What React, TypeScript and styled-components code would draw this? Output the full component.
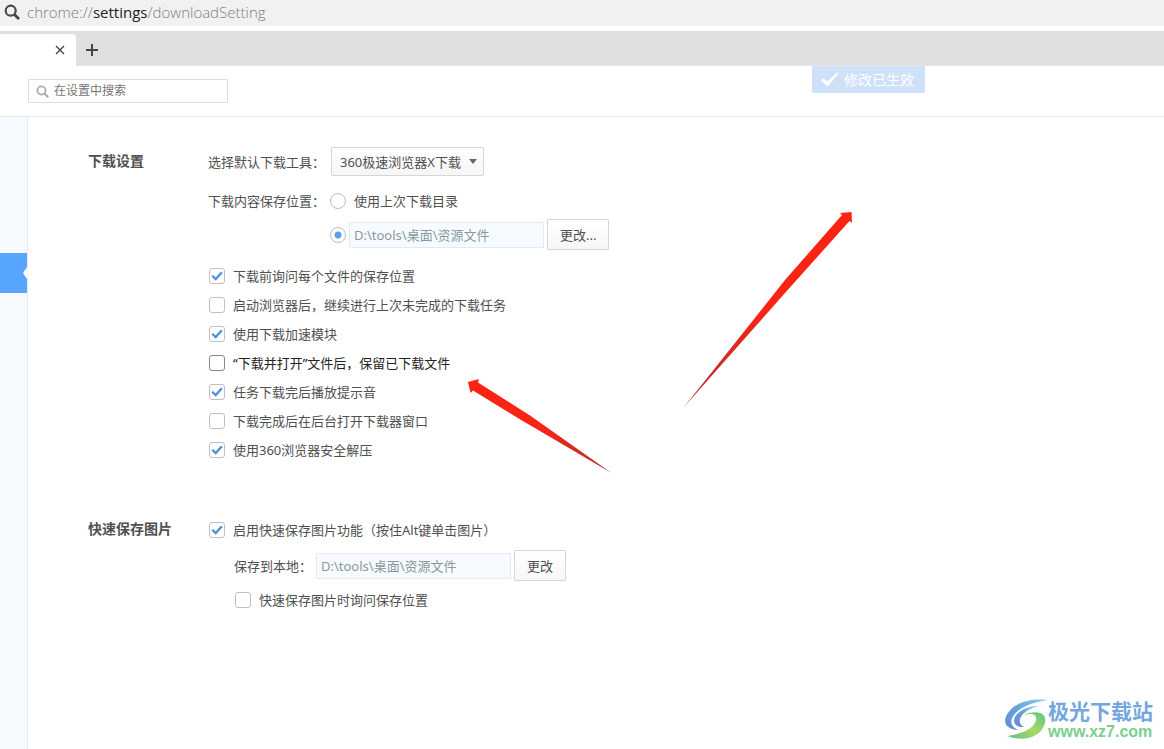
import React from "react";
import styled, { createGlobalStyle } from "styled-components";

const GlobalStyle = createGlobalStyle`
  *, *::before, *::after { box-sizing: border-box; }
  body {
    margin: 0;
    background: #fff;
    color: #505050;
    font: 13px/20px "Noto Sans", "Noto Sans CJK SC", sans-serif;
  }
  button, input, select { font: inherit; color: inherit; margin: 0; }
`;

const Page = styled.div`
  position: relative;
  display: flex;
  flex-direction: column;
  min-height: 100vh;
  overflow: hidden;
`;

const AddressBar = styled.div`
  display: flex;
  align-items: center;
  gap: 7px;
  height: 26px;
  padding: 0 4px 3px;
  background: #f1f1f1;
`;

const Address = styled.span`
  color: #808080;
  font: 300 15px/20px "Open Sans", "Noto Sans", sans-serif;

  b { color: #222; font-weight: 400; }
`;

const TabStrip = styled.div`
  display: flex;
  height: 35px;
  margin-top: 5px;
  padding-top: 3px;
  background: #dfdfdf;
  border-bottom: 1px solid #e6e6e6;
`;

const Tab = styled.div`
  display: flex;
  align-items: center;
  justify-content: flex-end;
  width: 76px;
  height: 32px;
  padding-right: 10px;
  background: #fff;
  border-top-right-radius: 4px;
`;

const IconButton = styled.button`
  display: flex;
  align-items: center;
  padding: 0;
  border: 0;
  background: none;
`;

const NewTab = styled(IconButton)`
  padding-left: 9px;
`;

const Header = styled.header`
  position: relative;
  padding: 13px 28px;
  border-bottom: 1px solid #ebebeb;
`;

const SearchBox = styled.label`
  display: flex;
  align-items: center;
  gap: 5px;
  width: 200px;
  height: 24px;
  padding: 0 7px;
  border: 1px solid #dedede;
  border-radius: 1px;
`;

const SearchInput = styled.input`
  flex: 1;
  min-width: 0;
  padding: 0;
  border: 0;
  outline: 0;
  background: none;
  font-size: 12px;

  &::placeholder { color: #757575; opacity: 1; }
`;

const Toast = styled.div`
  position: absolute;
  top: 0;
  right: 239px;
  display: flex;
  align-items: center;
  gap: 5px;
  height: 27px;
  padding: 0 11px 0 9px;
  border-radius: 1px;
  background: #cfe1f9;
  color: #fff;
  font-size: 14px;
`;

const Body = styled.div`
  display: flex;
  flex: 1;
`;

const Sidebar = styled.nav`
  width: 28px;
  padding-top: 136px;
  background: #f7fbff;
  border-right: 1px solid #e4ebf2;
`;

const ActiveItem = styled.a`
  display: flex;
  align-items: center;
  justify-content: flex-end;
  height: 40px;
  background: #57a5ff;
`;

const Main = styled.main`
  flex: 1;
  display: flex;
  flex-direction: column;
  gap: 51px;
  padding: 30px 60px;
`;

const Section = styled.section`
  display: grid;
  grid-template-columns: 120px 1fr;
`;

const Title = styled.h2`
  margin: 0;
  font-size: 14px;
  font-weight: 700;
  line-height: 28px;
`;

const Fields = styled.div`
  display: flex;
  flex-direction: column;
`;

const Row = styled.div<{ $top?: number; $indent?: number }>`
  display: flex;
  align-items: center;
  margin-top: ${(p) => p.$top ?? 0}px;
  padding-left: ${(p) => p.$indent ?? 0}px;
`;

const FieldLabel = styled.label<{ $width: number }>`
  flex: none;
  width: ${(p) => p.$width}px;
`;

const SelectWrap = styled.span`
  display: grid;
  align-items: center;
  margin-left: 1px;

  > * { grid-area: 1 / 1; }
  > svg { justify-self: end; margin-right: 7px; pointer-events: none; }
`;

const Select = styled.select`
  appearance: none;
  width: 153px;
  height: 29px;
  padding: 0 8px;
  border: 1px solid #d6d6d6;
  border-radius: 2px;
  background: linear-gradient(#fff, #f6f6f6);
`;

const Option = styled.label<{ $strong?: boolean }>`
  display: flex;
  align-items: center;
  gap: 8px;
  color: ${(p) => (p.$strong ? "#222" : "inherit")};
`;

const CheckRow = styled(Option)`
  min-height: 29px;
  padding-left: 1px;
`;

const CheckBox = styled.span`
  display: grid;
  place-items: center;

  > * { grid-area: 1 / 1; }
  > svg { display: none; pointer-events: none; }
  > input:checked + svg { display: block; }
`;

const CheckInput = styled.input<{ $strong?: boolean }>`
  appearance: none;
  width: 16px;
  height: 16px;
  border: 1px solid ${(p) => (p.$strong ? "#888" : "#c0c0c0")};
  border-radius: 3px;
  background: #fff;
`;

const Radio = styled.input`
  appearance: none;
  flex: none;
  width: 16px;
  height: 16px;
  border: 1px solid #bdbdbd;
  border-radius: 50%;
  background: #fff;

  &:checked { background: radial-gradient(circle, #5f9fe6 3px, #fff 4px); }
`;

const PathInput = styled.input`
  width: 195px;
  height: 26px;
  margin: 0 3px;
  padding: 0 4px;
  border: 1px solid #e1eaf1;
  border-radius: 1px;
  background: #f7fbff;
  color: #8798a0;
`;

const Button = styled.button`
  height: 31px;
  padding: 0 12px;
  border: 1px solid #d6d6d6;
  border-radius: 1px;
  background: linear-gradient(#fff, #f7f7f7);
`;

const Arrow = styled.svg<{ $x: number; $y: number }>`
  position: absolute;
  left: ${(p) => p.$x}px;
  top: ${(p) => p.$y}px;
  pointer-events: none;
`;

const Watermark = styled.div`
  position: absolute;
  right: 11px;
  bottom: 8px;
  display: flex;
  align-items: center;
`;

const WatermarkName = styled.div`
  color: #72a7e0;
  font-size: 21px;
  font-weight: 700;
  line-height: 24px;
`;

const WatermarkSite = styled.div`
  color: #7dce92;
  font: 700 16px/18px "Liberation Sans", sans-serif;
`;

function Magnifier({ size, color }: { size: number; color: string }) {
  return (
    <svg width={size} height={size} viewBox="0 0 16 16" fill="none" stroke={color} aria-hidden>
      <circle cx="6.7" cy="6.7" r="5" strokeWidth="2.2" />
      <path d="M10.4 10.4 15 15" strokeWidth="2.8" />
    </svg>
  );
}

function Check(props: { text: string; checked?: boolean; strong?: boolean }) {
  return (
    <CheckRow $strong={props.strong}>
      <CheckBox>
        <CheckInput type="checkbox" defaultChecked={props.checked} $strong={props.strong} />
        <svg width="12" height="12" viewBox="0 0 12 12" fill="none" aria-hidden>
          <path d="M1.2 5.8 4.7 9.1 10.9 2.2" stroke="#4a90dc" strokeWidth="2.2" />
        </svg>
      </CheckBox>
      {props.text}
    </CheckRow>
  );
}

const downloadOptions = [
  { text: "下载前询问每个文件的保存位置", checked: true },
  { text: "启动浏览器后，继续进行上次未完成的下载任务" },
  { text: "使用下载加速模块", checked: true },
  { text: "“下载并打开”文件后，保留已下载文件", strong: true },
  { text: "任务下载完后播放提示音", checked: true },
  { text: "下载完成后在后台打开下载器窗口" },
  { text: "使用360浏览器安全解压", checked: true },
];

export default function App() {
  return (
    <Page>
      <GlobalStyle />
      <AddressBar>
        <Magnifier size={16} color="#484848" />
        <Address>
          chrome://<b>settings</b>/downloadSetting
        </Address>
      </AddressBar>
      <TabStrip>
        <Tab>
          <IconButton aria-label="关闭标签页">
            <svg width="12" height="12" viewBox="0 0 12 12" stroke="#444" strokeWidth="1.4" aria-hidden>
              <path d="M2 2l8 8M10 2l-8 8" />
            </svg>
          </IconButton>
        </Tab>
        <NewTab aria-label="新建标签页">
          <svg width="14" height="14" viewBox="0 0 14 14" stroke="#444" strokeWidth="2" aria-hidden>
            <path d="M7 1v12M1 7h12" />
          </svg>
        </NewTab>
      </TabStrip>
      <Header>
        <SearchBox>
          <Magnifier size={13} color="#adadad" />
          <SearchInput type="text" placeholder="在设置中搜索" aria-label="在设置中搜索" />
        </SearchBox>
        <Toast role="status">
          <svg width="18" height="15" viewBox="0 0 18 15" fill="#fff" aria-hidden>
            <path d="M0 8.5 2.5 6.2 6.3 9.4 16 0.6 17.6 1 6.8 14.6Z" />
          </svg>
          修改已生效
        </Toast>
      </Header>
      <Body>
        <Sidebar>
          <ActiveItem href="#download" aria-label="下载设置">
            <svg width="4" height="12" viewBox="0 0 4 12" fill="#fff" aria-hidden>
              <path d="M4 0v12L0 6z" />
            </svg>
          </ActiveItem>
        </Sidebar>
        <Main>
          <Section>
            <Title>下载设置</Title>
            <Fields>
              <Row>
                <FieldLabel $width={122} htmlFor="tool">选择默认下载工具：</FieldLabel>
                <SelectWrap>
                  <Select id="tool">
                    <option>360极速浏览器X下载</option>
                  </Select>
                  <svg width="8" height="5" viewBox="0 0 8 5" fill="#666" aria-hidden>
                    <path d="M0 0h8L4 5z" />
                  </svg>
                </SelectWrap>
              </Row>
              <Row $top={15}>
                <FieldLabel $width={122} htmlFor="last-folder">下载内容保存位置：</FieldLabel>
                <Option>
                  <Radio type="radio" name="folder" id="last-folder" />
                  使用上次下载目录
                </Option>
              </Row>
              <Row $top={8} $indent={122}>
                <Radio type="radio" name="folder" defaultChecked aria-label="指定目录" />
                <PathInput type="text" readOnly value="D:\tools\桌面\资源文件" aria-label="下载目录" />
                <Button>更改...</Button>
              </Row>
              <Row $top={11}>
                <Fields>
                  {downloadOptions.map((o) => (
                    <Check key={o.text} {...o} />
                  ))}
                </Fields>
              </Row>
            </Fields>
          </Section>
          <Section>
            <Title>快速保存图片</Title>
            <Fields>
              <Row>
                <Check text="启用快速保存图片功能（按住Alt键单击图片）" checked />
              </Row>
              <Row $top={6} $indent={26}>
                <FieldLabel $width={79} htmlFor="image-folder">保存到本地：</FieldLabel>
                <PathInput id="image-folder" type="text" readOnly value="D:\tools\桌面\资源文件" />
                <Button>更改</Button>
              </Row>
              <Row $top={4} $indent={26}>
                <Check text="快速保存图片时询问保存位置" />
              </Row>
            </Fields>
          </Section>
        </Main>
      </Body>
      <Arrow $x={680} $y={206} width="180" height="206" viewBox="680 206 180 206" aria-hidden>
        <defs>
          <linearGradient id="shaftA" x1="1" y1="0" x2="0" y2="1">
            <stop offset="0.5" stopColor="#fb2414" />
            <stop offset="1" stopColor="#b03030" />
          </linearGradient>
        </defs>
        <path d="M851.5 212 852 223 849.5 221 785 293 684 407 785 280 842 215 840 213Z" fill="url(#shaftA)" />
      </Arrow>
      <Arrow $x={462} $y={374} width="156" height="104" viewBox="462 374 156 104" aria-hidden>
        <defs>
          <linearGradient id="shaftB" x1="0" y1="0" x2="1" y2="1">
            <stop offset="0.5" stopColor="#fb2414" />
            <stop offset="1" stopColor="#b03030" />
          </linearGradient>
        </defs>
        <path d="M468 382 479 379 478 382.500 530 415.500 611.500 473 522 420.500 473 390.500 470.500 393Z" fill="url(#shaftB)" />
      </Arrow>
      <Watermark>
        <svg width="44" height="42" viewBox="42 40 132 126" aria-hidden>
          <defs>
            <linearGradient id="sky" x1="1" y1="0" x2="0" y2="1">
              <stop offset="0" stopColor="#8fd3ee" />
              <stop offset="0.5" stopColor="#62a4dc" />
              <stop offset="1" stopColor="#6a86d8" />
            </linearGradient>
            <linearGradient id="leaf" x1="1" y1="0" x2="0" y2="1">
              <stop offset="0" stopColor="#5fc48e" />
              <stop offset="0.5" stopColor="#a9d860" />
              <stop offset="1" stopColor="#62bf92" />
            </linearGradient>
          </defs>
          <path d="M174 43C118 37 70 52 50 88C38 112 50 130 84 133C62 122 58 106 72 88C88 66 120 52 174 43Z" fill="url(#sky)" />
          <path d="M146 60C104 62 74 82 72 104C72 118 84 126 102 124C88 116 86 104 94 92C104 76 122 68 146 60Z" fill="url(#sky)" />
          <path d="M102 88C128 80 142 88 138 104C132 128 100 144 52 151C92 166 134 160 154 134C172 110 172 82 138 80C122 80 110 83 102 88Z" fill="url(#leaf)" />
        </svg>
        <div>
          <WatermarkName>极光下载站</WatermarkName>
          <WatermarkSite>www.xz7.com</WatermarkSite>
        </div>
      </Watermark>
    </Page>
  );
}
